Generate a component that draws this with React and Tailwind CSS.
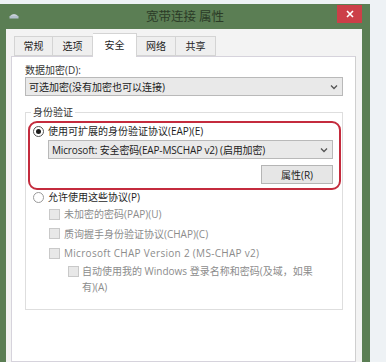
export default function App() {
  const disabledBox = "w-[11px] h-[11px] border border-[#c9c9c9] bg-[#e8e8e8] shrink-0";
  return (
    <div className="w-[386px] h-[362px] overflow-hidden bg-[#eef2f5] pt-[4px] font-['Open_Sans','Noto_Sans_CJK_SC',sans-serif] text-[10px] text-[#1e1e1e]">
      <div className="w-[370px] h-[358px] bg-[#5b7e54] flex flex-col">
        {/* title bar */}
        <div className="h-[25px] shrink-0 grid grid-cols-[1fr_auto_1fr] items-start">
          <div className="pl-[9px] pt-[8px]">
            <svg width="10" height="7" viewBox="0 0 10 7">
              <path d="M1 4 Q5 0 9 4 Z" fill="#c8d0d8" />
              <rect x="0.5" y="4" width="9" height="2.5" fill="#b4c0cc" />
            </svg>
          </div>
          <div className="pt-[3px] text-[12.5px] leading-[18px] text-[#2b3b27] font-['Noto_Sans_CJK_SC',sans-serif]">宽带连接 属性</div>
          <div className="flex justify-end pr-[8px] pt-[1px]">
            <div className="w-[25px] h-[18px] bg-[#cc3f48] flex items-center justify-center">
              <svg width="8" height="8" viewBox="0 0 8 8">
                <path d="M1 1 L7 7 M7 1 L1 7" stroke="#ffffff" strokeWidth="1.6" />
              </svg>
            </div>
          </div>
        </div>
        {/* client area */}
        <div className="flex-1 ml-[6px] mr-[8px] bg-[#f3f3f3] pt-[4px] pl-[5px] pr-[6px] flex flex-col">
          {/* tabs */}
          <div className="h-[23px] shrink-0 flex items-end pl-[3px] relative z-10">
            <div className="w-[39px] h-[20px] border border-[#d4d4d4] bg-[#efefef] flex items-center justify-center leading-none">常规</div>
            <div className="w-[40px] h-[20px] border border-l-0 border-[#d4d4d4] bg-[#efefef] flex items-center justify-center leading-none">选项</div>
            <div className="w-[44px] h-[24px] -mb-px border border-b-0 border-l-0 border-[#d4d4d4] bg-white flex items-start pt-[4px] justify-center leading-[14px]">安全</div>
            <div className="w-[39px] h-[20px] border border-l-0 border-[#d4d4d4] bg-[#efefef] flex items-center justify-center leading-none">网络</div>
            <div className="w-[40px] h-[20px] border border-l-0 border-[#d4d4d4] bg-[#efefef] flex items-center justify-center leading-none">共享</div>
          </div>
          {/* tab page */}
          <div className="flex-1 bg-white border border-[#d6d3dc] border-r-[#cfcfcf] pl-[13px] pr-[12px] pt-[6px]">
            <div className="leading-[14px] text-[#333]">数据加密(D):</div>
            <div className="h-[19px] border border-[#b9b9b9] bg-[#e9e9e9] flex items-center justify-between pl-[3px] pr-[4px] text-[#222]">
              <span className="leading-none">可选加密(没有加密也可以连接)</span>
              <svg width="8" height="6" viewBox="0 0 8 6">
                <path d="M1 1.5 L4 4.5 L7 1.5" stroke="#555" strokeWidth="1.3" fill="none" />
              </svg>
            </div>
            <fieldset className="mt-[9px] border border-[#dedede] pb-[14px]">
              <legend className="ml-[5px] px-[2px] leading-[14px] text-[#333]">身份验证</legend>
              <div className="mt-[2px] ml-[2px] mr-[1px] border-2 border-[#c42b3d] rounded-[9px] pl-[3px] pr-[6px] pt-[1px] pb-[4px] flex flex-col">
                <div className="h-[14px] flex items-center gap-[4px]">
                  <div className="w-[11px] h-[11px] rounded-full border border-[#555] bg-white flex items-center justify-center">
                    <div className="w-[5px] h-[5px] rounded-full bg-[#1c1c1c]" />
                  </div>
                  <span className="leading-none">使用可扩展的身份验证协议(EAP)(E)</span>
                </div>
                <div className="mt-[2px] ml-[15px] h-[19px] border border-[#b9b9b9] bg-[#e9e9e9] flex items-center justify-between pl-[3px] pr-[4px] text-[#222]">
                  <span className="leading-none whitespace-nowrap tracking-[-0.15px]">Microsoft: 安全密码(EAP-MSCHAP v2) (启用加密)</span>
                  <svg width="8" height="6" viewBox="0 0 8 6">
                    <path d="M1 1.5 L4 4.5 L7 1.5" stroke="#555" strokeWidth="1.3" fill="none" />
                  </svg>
                </div>
                <div className="mt-[6px] self-end w-[72px] h-[19px] border border-[#b5b5b5] bg-[#e6e6e6] flex items-center justify-center leading-none text-[#222]">属性(R)</div>
              </div>
              <div className="h-[14px] pl-[7px] flex items-center gap-[4px]">
                <div className="w-[11px] h-[11px] rounded-full border border-[#9a9a9a] bg-white" />
                <span className="leading-none">允许使用这些协议(P)</span>
              </div>
              <div className="pl-[23px] text-[#8c8c8c]">
                <div className="h-[20px] flex items-center gap-[4px]">
                  <div className={disabledBox} />
                  <span className="leading-none">未加密的密码(PAP)(U)</span>
                </div>
                <div className="h-[19px] flex items-center gap-[4px]">
                  <div className={disabledBox} />
                  <span className="leading-none">质询握手身份验证协议(CHAP)(C)</span>
                </div>
                <div className="h-[20px] flex items-center gap-[4px]">
                  <div className={disabledBox} />
                  <span className="leading-none tracking-[0.3px]">Microsoft CHAP Version 2 (MS-CHAP v2)</span>
                </div>
                <div className="pl-[19px] flex items-start gap-[3px] leading-[16px]">
                  <div className={disabledBox + " mt-[3px]"} />
                  <span className="whitespace-nowrap">
                    自动使用我的 Windows 登录名称和密码(及域，如果
                    <br />
                    有)(A)
                  </span>
                </div>
              </div>
            </fieldset>
          </div>
        </div>
      </div>
    </div>
  );
}
